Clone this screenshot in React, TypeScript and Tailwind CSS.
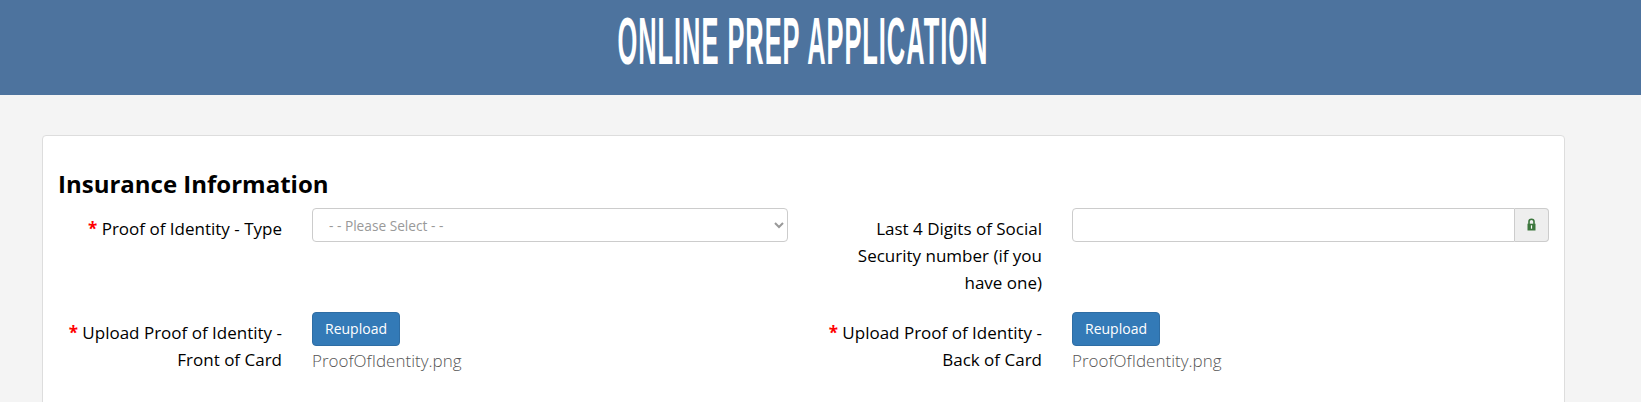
import React from "react";

const Star = () => <span className="font-bold text-[#ff0000]">* </span>;

const Lock = () => (
  <svg className="mb-[2px]" width="11" height="13" viewBox="0 0 11 13" aria-hidden="true">
    <path d="M3 6V3.6C3 2.2 4 1.2 5.5 1.2S8 2.2 8 3.6V6" fill="none" stroke="#3c763d" strokeWidth="1.6" />
    <path d="M1.5 5.7h8v6.8h-8z" fill="#3c763d" />
    <path d="M4.9 7.3h1.2v3.4H4.9z" fill="#ffffff" />
  </svg>
);

const Upload = () => (
  <div>
    <button
      type="button"
      className="h-[34px] w-[88px] rounded border border-[#2e6da4] bg-[#337ab7] text-sm text-white"
    >
      Reupload
    </button>
    <div className="mt-px font-light text-[#555555]">ProofOfIdentity.png</div>
  </div>
);

const App = () => {
  return (
    <div className="h-[402px] overflow-hidden bg-[#f4f4f4] font-['Open_Sans',sans-serif] text-[17px] leading-[27px] text-black">
      {/* title sits a little left of the page centre in the original */}
      <header className="flex h-[95px] items-start justify-center overflow-hidden bg-[#4d739e] pr-[36px]">
        <h1 className="mt-[2px] origin-center scale-x-[0.38] whitespace-nowrap font-['Liberation_Sans',sans-serif] text-[67px] leading-[77px] font-bold tracking-[2.5px] text-white">
          ONLINE PREP APPLICATION
        </h1>
      </header>

      <main className="mt-10 ml-[42px] h-[400px] w-[1523px] rounded border border-[#dddddd] bg-white px-[15px] pt-[31px]">
        <h2 className="text-2xl leading-[34px] font-bold">Insurance Information</h2>

        <div className="mt-[7px] grid grid-cols-[730px_731px] gap-x-[30px] gap-y-[16px]">
          <div className="grid grid-cols-[224px_1fr] gap-x-[30px]">
            <label className="pt-[7px] text-right">
              <Star />
              Proof of Identity - Type
            </label>
            <select className="h-[34px] w-full rounded border border-[#cccccc] bg-white px-3 text-[13.7px] text-[#999999]">
              <option>- - Please Select - -</option>
            </select>
          </div>

          <div className="grid grid-cols-[224px_1fr] gap-x-[30px]">
            <label className="pt-[7px] text-right">Last 4 Digits of Social Security number (if you have one)</label>
            <div className="flex h-[34px]">
              <input className="min-w-0 flex-1 rounded-l border border-[#cccccc] bg-white" />
              <span className="flex w-[34px] items-center justify-center rounded-r border border-l-0 border-[#cccccc] bg-[#eeeeee]">
                <Lock />
              </span>
            </div>
          </div>

          <div className="grid grid-cols-[224px_1fr] gap-x-[30px]">
            <label className="pt-[7px] text-right">
              <Star />
              Upload Proof of Identity - Front of Card
            </label>
            <Upload />
          </div>

          <div className="grid grid-cols-[224px_1fr] gap-x-[30px]">
            <label className="pt-[7px] text-right">
              <Star />
              Upload Proof of Identity - Back of Card
            </label>
            <Upload />
          </div>
        </div>
      </main>
    </div>
  );
};

export default App;
